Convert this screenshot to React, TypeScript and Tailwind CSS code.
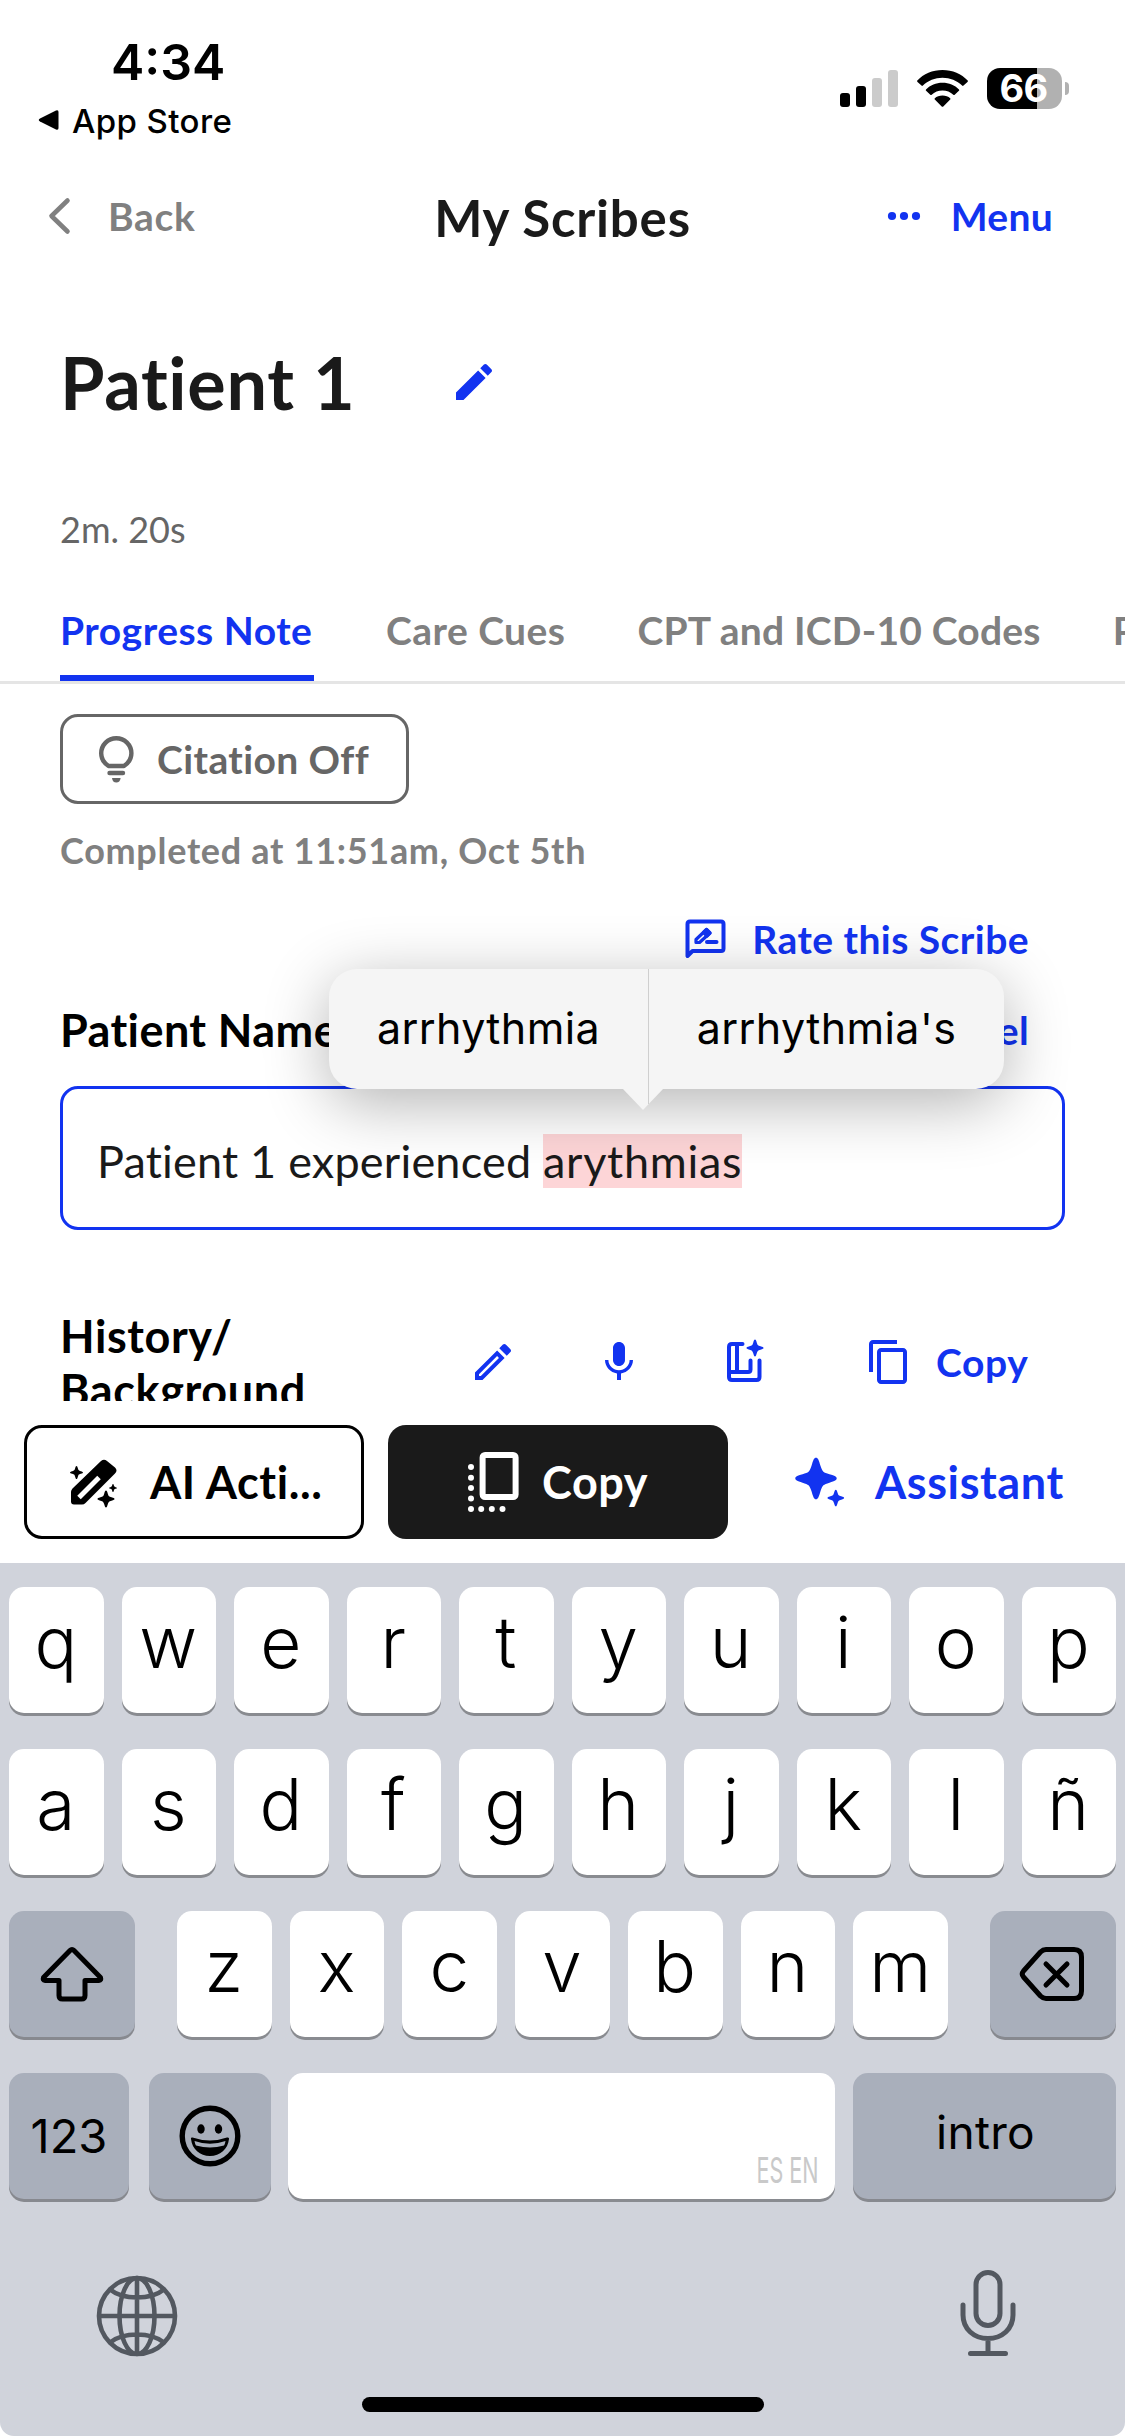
import React from "react";

const BLUE = "#1233F0";

function Sparkle({ x, y, r }: { x: number; y: number; r: number }) {
  return (
    <path
      transform={`translate(${x} ${y}) scale(${r})`}
      d="M0 -1 C.1 -1 .13 -.9 .22 -.6 C.32 -.3 .35 -.3 .65 -.2 C.92 -.12 1 -.08 1 0 C1 .08 .92 .12 .65 .2 C.35 .3 .32 .3 .22 .6 C.13 .9 .1 1 0 1 C-.1 1 -.13 .9 -.22 .6 C-.32 .3 -.35 .3 -.65 .2 C-.92 .12 -1 .08 -1 0 C-1 -.08 -.92 -.12 -.65 -.2 C-.35 -.3 -.32 -.3 -.22 -.6 C-.13 -.9 -.1 -1 0 -1Z"
    />
  );
}

function Glyph({ d }: { d: string }) {
  return (
    <svg viewBox="0 0 24 24" className="size-12 shrink-0" fill={BLUE}>
      <path d={d} />
    </svg>
  );
}

const EDIT =
  "M3 17.25V21h3.75L17.81 9.94l-3.75-3.75L3 17.25zM20.71 7.04c.39-.39.39-1.02 0-1.41l-2.34-2.34c-.39-.39-1.02-.39-1.41 0l-1.83 1.83 3.75 3.75 1.83-1.83z";
const EDIT_OUTLINE =
  "M3 17.25V21h3.75L17.81 9.94l-3.75-3.75L3 17.25zM5.92 19H5v-.92l9.06-9.06.92.92L5.92 19zM20.71 5.63l-2.34-2.34c-.2-.2-.45-.29-.71-.29s-.51.1-.7.29l-1.83 1.83 3.75 3.75 1.83-1.83c.39-.39.39-1.02 0-1.41z";
const MIC =
  "M12 14c1.66 0 2.99-1.34 2.99-3L15 5c0-1.66-1.34-3-3-3S9 3.34 9 5v6c0 1.66 1.34 3 3 3zm5.3-3c0 3-2.54 5.1-5.3 5.1S6.7 14 6.7 11H5c0 3.41 2.72 6.23 6 6.72V21h2v-3.28c3.28-.48 6-3.3 6-6.72h-1.7z";
const COPY =
  "M16 1H4c-1.1 0-2 .9-2 2v14h2V3h12V1zm3 4H8c-1.1 0-2 .9-2 2v14c0 1.1.9 2 2 2h11c1.1 0 2-.9 2-2V7c0-1.1-.9-2-2-2zm0 16H8V7h11v14z";

function StatusBar() {
  return (
    <div className="flex h-[180px] justify-between font-['Inter',sans-serif] text-black">
      <div className="pt-8">
        <div className="ml-[111px] h-[60px] text-[50px] font-semibold leading-[60px]">4:34</div>
        <div className="mt-[9px] flex h-10 items-center pl-[38px]">
          <svg viewBox="0 0 21 22" className="mb-0.5 h-[22px] w-[21px]">
            <path d="M2 9.5 18 1.5Q20.5 .5 20.5 3V19Q20.5 21.500 18 20.500L2 12.500Q-.5 11 2 9.500Z" />
          </svg>
          <span className="ml-[13px] text-[33px] font-medium leading-10 tracking-[0.4px]">App Store</span>
        </div>
      </div>
      <div className="mr-[56px] mt-[68px] flex h-[41px] items-start">
        <svg viewBox="0 0 58 41" className="h-[41px] w-[58px]">
          <rect x="0" y="25" width="10" height="14" rx="3" />
          <rect x="16" y="18" width="10" height="21" rx="3" />
          <rect x="32" y="10" width="10" height="29" rx="3" fill="#cbcbcb" />
          <rect x="48" y="2" width="10" height="37" rx="3" fill="#cbcbcb" />
        </svg>
        <svg viewBox="0 0 51 41" className="ml-[19px] h-[41px] w-[51px]">
          <path d="M25.500 2C35.500 2 44.500 6 50.700 12.500Q51.200 13.200 50.500 13.900L46.500 17.600Q45.800 18.200 45.100 17.500C40 12.500 33 9.700 25.500 9.700S11 12.500 5.900 17.500Q5.200 18.200 4.500 17.600L.5 13.900Q-.2 13.200 .3 12.500C6.500 6 15.500 2 25.500 2Z" />
          <path d="M25.500 14.800C32 14.800 37.700 17.300 42 21.400Q42.600 22.100 41.900 22.800L37.700 26.700Q37 27.300 36.300 26.700C33.500 24 29.700 22.500 25.500 22.500S17.500 24 14.700 26.700Q14 27.300 13.300 26.700L9.100 22.800Q8.400 22.100 9 21.400C13.300 17.300 19 14.800 25.500 14.800Z" />
          <path d="M25.500 27.600C28.600 27.600 31.300 28.700 33.200 30.300Q33.800 31 33.200 31.600L26.300 38.500Q25.500 39.200 24.700 38.500L17.800 31.600Q17.200 31 17.800 30.300C19.700 28.700 22.400 27.600 25.500 27.600Z" />
        </svg>
        <div className="ml-[19px] flex items-center">
          <div className="flex h-[41px] w-[75px] items-center justify-center rounded-[13px] bg-[linear-gradient(90deg,#000_0_50px,#b1b1b1_50px)] pr-0.5 text-[38px] font-bold leading-[41px] tracking-[-0.8px] text-white">
            66
          </div>
          <div className="ml-[3px] h-[13px] w-1 rounded-r-[5px] bg-[#b1b1b1]" />
        </div>
      </div>
    </div>
  );
}

function Header() {
  return (
    <div className="relative flex h-[72px] items-center justify-center">
      <div className="absolute left-12 top-0 flex h-[72px] items-center text-[#808080]">
        <svg viewBox="0 0 24 40" className="h-10 w-6" fill="none" stroke="#808080" strokeWidth="4.600" strokeLinecap="round" strokeLinejoin="round">
          <path d="M19.500 4.500 3.500 20l16 15.500" />
        </svg>
        <span className="ml-9 text-[39px] font-bold tracking-[0.7px]">Back</span>
      </div>
      <h1 className="mt-1 text-[51px] font-bold tracking-[0.8px] text-[#1a1a1a]">My Scribes</h1>
      <div className="absolute right-[72px] top-0 flex h-[72px] items-center text-[#1233F0]">
        <svg viewBox="0 0 34 10" className="h-2.5 w-[34px]" fill={BLUE}>
          <circle cx="5" cy="5" r="4.100" />
          <circle cx="17" cy="5" r="4.100" />
          <circle cx="29" cy="5" r="4.100" />
        </svg>
        <span className="ml-[30px] text-[39px] font-bold tracking-[0.3px]">Menu</span>
      </div>
    </div>
  );
}

function Tabs() {
  return (
    <div className="flex h-[105px] gap-[72px] overflow-hidden whitespace-nowrap border-b-[3px] border-[#e5e5e5] pl-[60px] text-[39px] font-bold leading-[102px] text-[#808080]">
      <div className="relative w-[254px] shrink-0 tracking-[0.5px] text-[#1233F0]">
        Progress Note
        <div className="absolute bottom-0 left-0 h-1.5 w-full bg-[#1233F0]" />
      </div>
      <div className="shrink-0 tracking-[0.45px]">Care Cues</div>
      <div className="shrink-0 tracking-[0.2px]">CPT and ICD-10 Codes</div>
      <div className="shrink-0">Patient Summary</div>
    </div>
  );
}

function Suggestions() {
  return (
    <div className="absolute left-[329px] top-[285px] flex h-[120px] w-[675px] rounded-[28px] bg-[#f5f5f5] font-['Inter',sans-serif] text-[43px] leading-[118px] tracking-[0.4px] text-black shadow-[0_14px_64px_rgba(0,0,0,0.3)]">
      <div className="w-[319px] text-center">arrhythmia</div>
      <div className="w-[356px] border-l border-[#cfcfcf] text-center">arrhythmia's</div>
      <svg viewBox="0 0 42 22" className="absolute left-[293px] top-[119px] h-[22px] w-[42px]">
        <path d="M0 0H42L21 22Z" fill="#f5f5f5" />
        <path d="M26.500 0V16" stroke="#cfcfcf" />
      </svg>
    </div>
  );
}

function BookIcon() {
  return (
    <svg viewBox="0 0 48 48" className="size-12 shrink-0" fill="none" stroke={BLUE} strokeWidth="4">
      <path strokeLinecap="round" d="M21.500 6H11Q8 6 8 9V39Q8 42 11 42H35.500Q38.500 42 38.500 39V22.500" />
      <path strokeLinecap="round" d="M16 7V34M8.500 34H27Q29.500 34 29.500 31.500V22.500" />
      <g fill={BLUE} stroke="none">
        <Sparkle x={34} y={10} r={8.500} />
      </g>
    </svg>
  );
}

function NoteContent() {
  return (
    <div className="relative h-[717px] overflow-hidden pl-[60px] pr-[60px] pt-[30px]">
      <div className="flex h-[90px] w-[349px] items-center rounded-[18px] border-[3px] border-[#666] pl-[29px] text-[#666]">
        <svg viewBox="0 0 48 48" className="size-12" fill="none" stroke="#666" strokeWidth="4.400">
          <path d="M16.500 31C12 28 9.200 23.500 9.200 18.300A15 15 0 0 1 39.400 18.300C39.400 23.500 36.500 28 32 31Z" strokeLinejoin="round" />
          <path d="M17.500 38H31" strokeLinecap="round" />
          <path d="M20 43H28.600Q28 47.500 24.300 47.500T20 43Z" fill="#666" stroke="none" />
        </svg>
        <span className="ml-[17px] text-[39px] font-bold tracking-[0.4px]">Citation Off</span>
      </div>
      <div className="mt-[22px] h-12 text-[36px] font-bold leading-[48px] tracking-[0.7px] text-[#808080]">Completed at 11:51am, Oct 5th</div>
      <div className="mt-[35px] flex h-[60px] items-center justify-end pr-9 text-[39px] font-bold tracking-[0.45px] text-[#1233F0]">
        <svg viewBox="0 0 48 48" className="size-12" fill="none" stroke={BLUE} strokeWidth="4" strokeLinecap="round" strokeLinejoin="round">
          <path d="M5.500 41V9Q5.500 6.500 8 6.500H39Q41.500 6.500 41.500 9V33.500Q41.500 36 39 36H10.500Z" />
          <path d="M14 27.500V24.500L24.500 14.500L28 18L17.500 27.500Z" strokeWidth="3.200" />
          <path d="M21.500 17.500 24.500 14.500 28 18 25 21Z" fill={BLUE} strokeWidth="3.200" />
          <path d="M25 27H34.500" />
        </svg>
        <span className="ml-[22px]">Rate this Scribe</span>
      </div>
      <div className="mt-[31px] flex h-[60px] items-center justify-between pr-9 font-bold">
        <span className="mt-0.5 text-[45px] tracking-[0.4px] text-black">Patient Name</span>
        <span className="text-[39px] tracking-[0.4px] text-[#1233F0]">Cancel</span>
      </div>
      <div className="mt-[26px] h-36 rounded-[18px] border-[3px] border-[#1233F0] pl-[34px] pt-[45px] text-[45px] leading-[54px] tracking-[0.2px] text-[#1a1a1a]">
        Patient 1 experienced <span className="bg-[#fdd5d7] tracking-[0.7px]">arythmias</span>
      </div>
      <div className="mt-[79px] flex h-[108px] items-center">
        <h2 className="w-[409px] text-[45px] font-bold leading-[54px] tracking-[0.6px] text-black">
          History/
          <br />
          Background
        </h2>
        <div className="flex items-center pb-0.5">
          <Glyph d={EDIT_OUTLINE} />
          <div className="ml-[78px]">
            <Glyph d={MIC} />
          </div>
          <div className="ml-[78px]">
            <BookIcon />
          </div>
          <div className="ml-24 flex items-center">
            <Glyph d={COPY} />
            <span className="ml-[23px] text-[39px] font-bold tracking-[0.6px] text-[#1233F0]">Copy</span>
          </div>
        </div>
      </div>
      <Suggestions />
    </div>
  );
}

function ActionBar() {
  return (
    <div className="flex h-[162px] gap-6 px-6 pt-6 text-[45px] font-bold tracking-[0.6px]">
      <div className="flex h-[114px] w-[340px] items-center rounded-[18px] border-[3px] border-black pl-[37px] text-black">
        <svg viewBox="0 0 60 60" className="size-[60px]">
          <path d="M7 40Q7 38 8.500 36.500L37 9Q40 6.500 43 9L51 15.500Q54 18.500 51 21.500L21.500 51Q20 52.500 18 52.500H10Q7 52.500 7 49.500Z" />
          <path d="M15 45.500 35 25.500" stroke="#fff" strokeWidth="5" />
          <Sparkle x={12.500} y={20.500} r={6.500} />
          <circle cx="42" cy="47" r="9" fill="#fff" />
          <Sparkle x={42} y={47} r={8.500} />
          <Sparkle x={49} y={36} r={4} />
        </svg>
        <span className="ml-[26px] mt-0.5">AI Acti...</span>
      </div>
      <div className="flex h-[114px] w-[340px] items-center rounded-[18px] bg-[#1a1a1a] pl-[76px] text-white">
        <svg viewBox="0 0 60 60" className="size-[60px]" fill="#fff">
          <rect x="18.600" y="3" width="33" height="42" rx="2.500" fill="none" stroke="#fff" strokeWidth="6" />
          {[15, 25.700, 36, 46.500, 57].map((y) => (
            <circle key={y} cx="7" cy={y} r="3" />
          ))}
          {[17.200, 27.800, 38.500].map((x) => (
            <circle key={x} cx={x} cy="57" r="3" />
          ))}
        </svg>
        <span className="ml-[18px] mt-0.5">Copy</span>
      </div>
      <div className="flex h-[114px] items-center pl-10 text-[#1233F0]">
        <svg viewBox="0 0 60 60" className="size-[60px]" fill={BLUE}>
          <Sparkle x={24} y={26.500} r={20.700} />
          <Sparkle x={43.800} y={46} r={8.300} />
        </svg>
        <span className="ml-[23px] mt-0.5">Assistant</span>
      </div>
    </div>
  );
}

const KEY =
  "flex h-[126px] min-w-0 flex-1 justify-center rounded-[15px] bg-white pr-px text-[71px] font-[350] leading-[110px] shadow-[0_3px_0_#898b90]";
const DARK = "flex h-[126px] items-center justify-center rounded-[15px] bg-[#a9afbb] shadow-[0_3px_0_#87898f]";

function Keys({ letters }: { letters: string }) {
  return (
    <>
      {letters.split("").map((c) => (
        <div key={c} className={KEY}>
          {c}
        </div>
      ))}
    </>
  );
}

function Keyboard() {
  return (
    <div className="flex h-[873px] flex-col rounded-b-[14px] bg-[#d0d3db] px-[9px] pt-6 font-['Inter',sans-serif] text-black">
      <div className="flex flex-col gap-9">
        <div className="flex gap-[18px]">
          <Keys letters="qwertyuiop" />
        </div>
        <div className="flex gap-[18px]">
          <Keys letters="asdfghjklñ" />
        </div>
        <div className="flex gap-[42px]">
          <div className={`${DARK} w-[126px]`}>
            <svg viewBox="0 0 64 56" className="mt-[-1px] h-14 w-16" fill="none" stroke="#000" strokeWidth="5" strokeLinejoin="round">
              <path d="M32 3.500 Q33 3.500 34 4.500L60.500 31.500Q61.500 34.500 59 34.500H45V49.500Q45 53 41.500 53H22.500Q19 53 19 49.500V34.500H5Q2.500 34.500 3.500 31.500L30 4.500Q31 3.500 32 3.500Z" />
            </svg>
          </div>
          <div className="flex flex-1 gap-[18px]">
            <Keys letters="zxcvbnm" />
          </div>
          <div className={`${DARK} w-[126px]`}>
            <svg viewBox="0 0 66 56" className="mr-0.5 h-14 w-[66px]" fill="none" stroke="#000" strokeWidth="5" strokeLinecap="round" strokeLinejoin="round">
              <path d="M27 3.500H55Q62.500 3.500 62.500 11V45Q62.500 52.500 55 52.500H27Q24 52.500 21.500 50L4.500 31Q2 28 4.500 25L21.500 6Q24 3.500 27 3.500Z" />
              <path d="M27 18 48 39M48 18 27 39" />
            </svg>
          </div>
        </div>
        <div className="flex">
          <div className={`${DARK} w-[120px] pb-0.5 text-[47px] leading-none`}>123</div>
          <div className={`${DARK} ml-5 w-[122px]`}>
            <svg viewBox="0 0 62 62" className="size-[62px]">
              <circle cx="31" cy="31" r="27.800" fill="none" stroke="#000" strokeWidth="5.400" />
              <ellipse cx="22" cy="24" rx="3.700" ry="4.700" />
              <ellipse cx="39.500" cy="24" rx="3.700" ry="4.700" />
              <path d="M12 34Q11.500 32 13.500 32.500Q31 38.500 48 32.500Q50.500 32 50 34C49 44 41 51 31 51S13 44 12 34Z" />
              <path d="M15.500 36Q31 41.500 46.500 36Q46 39 45 40.500Q31 44.500 17 40.500Q16 39 15.500 36Z" fill="#a9afbb" />
            </svg>
          </div>
          <div className="ml-[17px] flex h-[126px] w-[547px] items-end justify-end rounded-[15px] bg-white pb-[9px] pr-4 shadow-[0_3px_0_#898b90]">
            <span className="origin-right scale-x-[0.6] whitespace-nowrap text-[36px] leading-10 text-[#c9c9c9]">ES EN</span>
          </div>
          <div className={`${DARK} ml-[18px] flex-1 pb-2 pl-0.5 text-[46px] leading-none tracking-[0.3px]`}>intro</div>
        </div>
      </div>
      <div className="mt-[70px] flex h-[88px] items-start justify-between pl-[87px] pr-[99px]">
        <svg viewBox="0 0 82 82" className="mt-[6px] size-[82px]" fill="none" stroke="#535860" strokeWidth="4.600">
          <circle cx="41" cy="41" r="38" />
          <ellipse cx="41" cy="41" rx="17.500" ry="38" />
          <path d="M41 3V79M3 41H79M14 14.500Q24 22.500 41 22.500T68 14.500M14 67.500Q24 59.500 41 59.500T68 67.500" />
        </svg>
        <svg viewBox="0 0 58 88" className="h-[88px] w-[58px]" fill="none" stroke="#535860" strokeWidth="5" strokeLinecap="round">
          <rect x="17" y="3.500" width="24" height="53" rx="12" />
          <path d="M4 36V46C4 60 15 69.500 29 69.500S54 60 54 46V36M29 69.500V84.500M11.500 84.500H46.500" />
        </svg>
      </div>
      <div className="ml-[353px] mt-10 h-[15px] w-[402px] rounded-full bg-black" />
    </div>
  );
}

export default function App() {
  return (
    <div className="h-[2436px] w-[1125px] overflow-hidden bg-white font-['Lato',sans-serif]">
      <StatusBar />
      <Header />
      <div className="mt-[84px] flex h-[92px] items-center pl-[60px]">
        <h1 className="w-[390px] text-[72px] font-bold leading-[92px] tracking-[0.7px] text-[#1a1a1a]">Patient 1</h1>
        <Glyph d={EDIT} />
      </div>
      <div className="mt-[76px] h-[50px] pl-[60px] text-[36px] leading-[50px] text-[#666]">2m. 20s</div>
      <div className="mt-[25px]">
        <Tabs />
      </div>
      <NoteContent />
      <ActionBar />
      <Keyboard />
    </div>
  );
}
